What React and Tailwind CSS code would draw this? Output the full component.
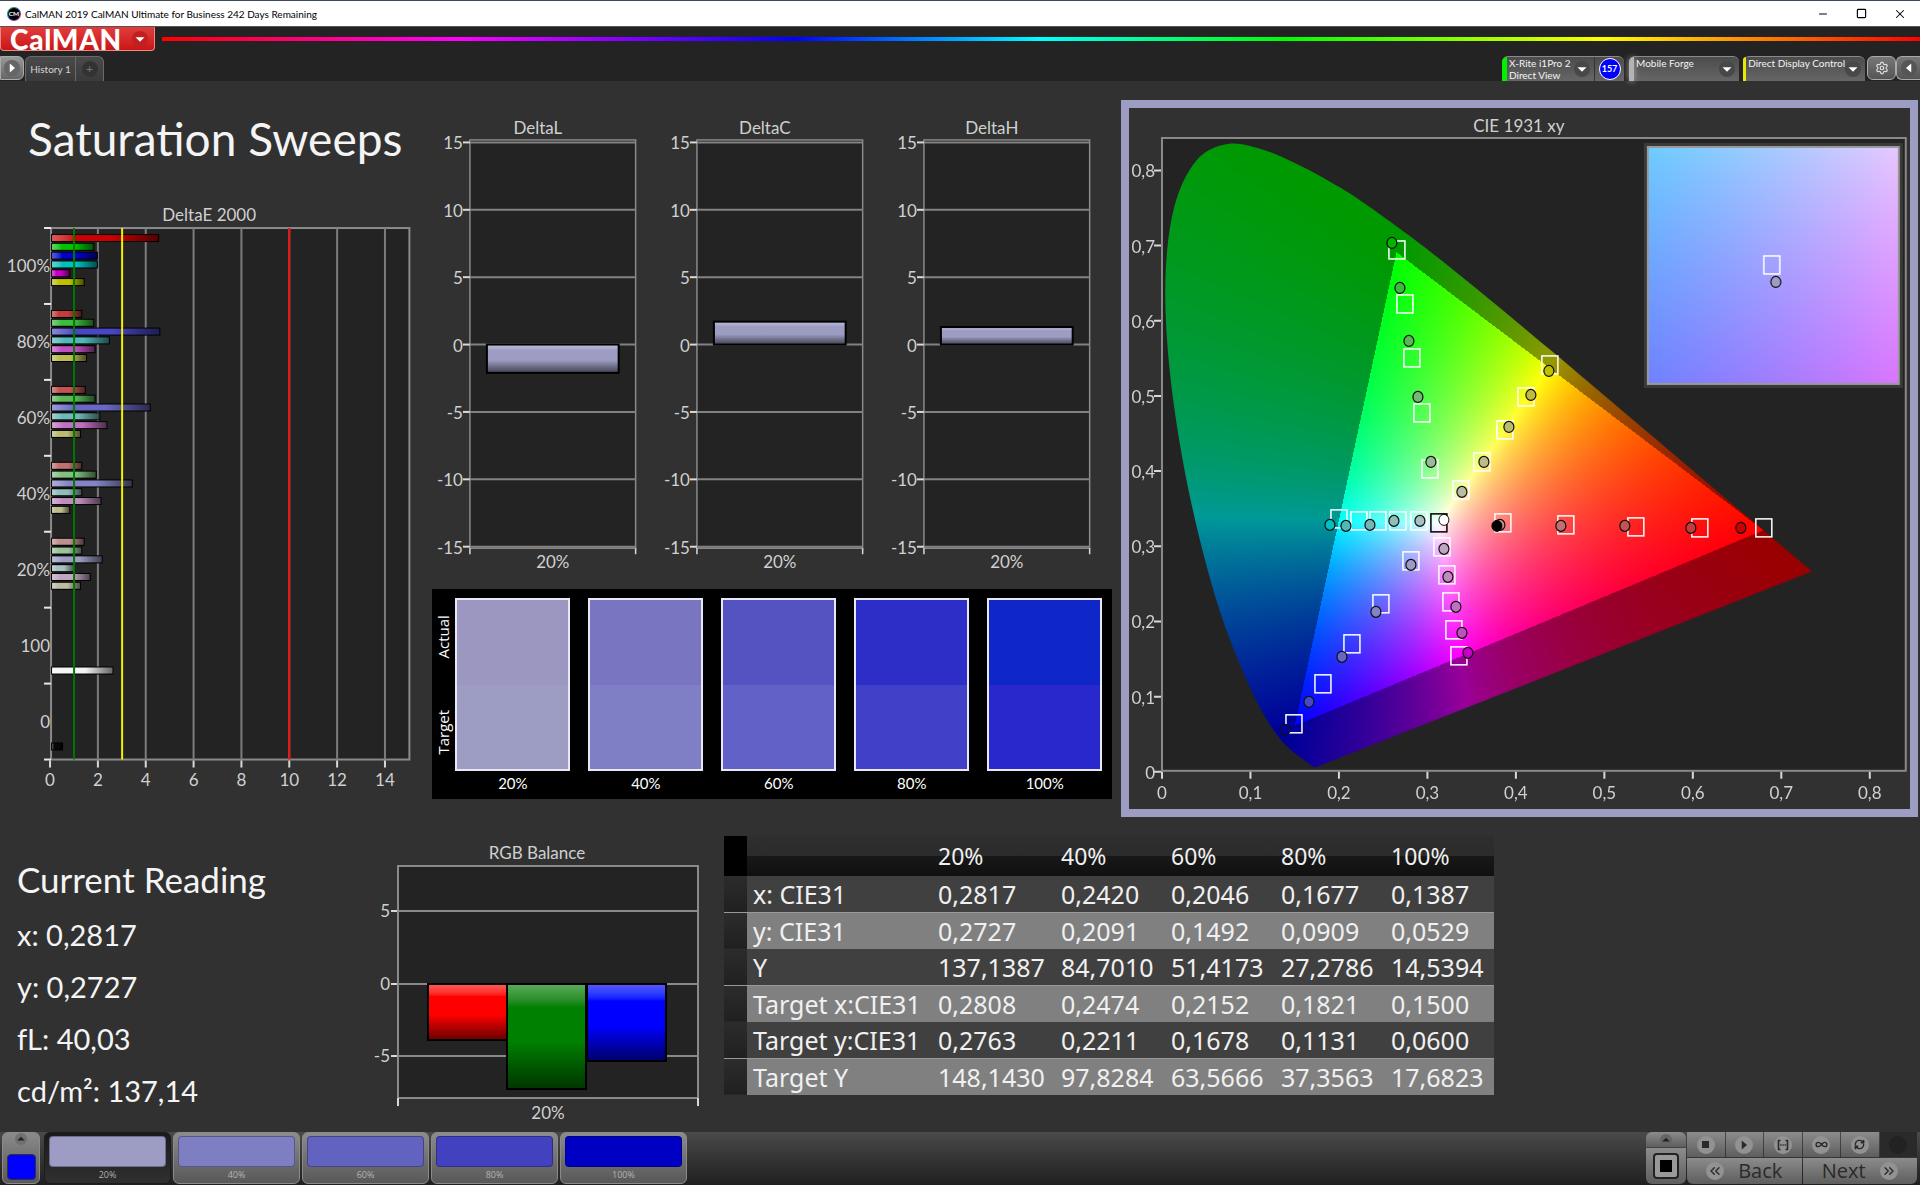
import React, { useLayoutEffect, useRef } from 'react';
import { Minus, Square, X, Settings, Infinity as InfinityIcon, RefreshCw, ChevronsLeft, ChevronsRight } from 'lucide-react';

const LEVELS = ['20%', '40%', '60%', '80%', '100%'];

const DELTA_E = [
  { label: '100%', bars: [[4.5, '#cc0000'], [1.8, '#00c400'], [1.95, '#0000cc'], [1.95, '#00c0c0'], [0.8, '#c400c4'], [1.4, '#c0c000']] },
  { label: '80%', bars: [[1.3, '#c43c3c'], [1.8, '#3cbc3c'], [4.55, '#4848c4'], [2.45, '#50b8b8'], [1.85, '#c050c0'], [1.5, '#bcbc50']] },
  { label: '60%', bars: [[1.45, '#c45454'], [1.85, '#58b858'], [4.15, '#6868c4'], [2.05, '#70b8b8'], [2.35, '#c070c0'], [1.25, '#bcbc70']] },
  { label: '40%', bars: [[1.3, '#c07070'], [1.9, '#80c080'], [3.4, '#8484c4'], [1.3, '#90bcbc'], [2.1, '#c08cc0'], [0.8, '#bcbc8c']] },
  { label: '20%', bars: [[1.4, '#c09090'], [1.3, '#9cc49c'], [2.15, '#9c9cc4'], [1, '#a8c0c0'], [1.65, '#c0a4c0'], [1.25, '#bcbca4']] },
  { label: '100', bars: [null, null, null, null, null, null, [2.6, '#f4f4f4']] },
  { label: '0', bars: [null, null, null, null, null, null, [0.5, '#080808']] },
];

const COMPARE = [
  { label: '20%', actual: '#9c97c0', target: '#9d9dc4' },
  { label: '40%', actual: '#7975c1', target: '#7f7fc6' },
  { label: '60%', actual: '#5552c1', target: '#6261c7' },
  { label: '80%', actual: '#2d2dc7', target: '#4140c8' },
  { label: '100%', actual: '#0f26c9', target: '#2928cd' },
];

const READINGS = [
  ['x: CIE31', '0,2817', '0,2420', '0,2046', '0,1677', '0,1387'],
  ['y: CIE31', '0,2727', '0,2091', '0,1492', '0,0909', '0,0529'],
  ['Y', '137,1387', '84,7010', '51,4173', '27,2786', '14,5394'],
  ['Target x:CIE31', '0,2808', '0,2474', '0,2152', '0,1821', '0,1500'],
  ['Target y:CIE31', '0,2763', '0,2211', '0,1678', '0,1131', '0,0600'],
  ['Target Y', '148,1430', '97,8284', '63,5666', '37,3563', '17,6823'],
];

const PATCHES = [
  { label: '20%', color: '#9c9cc4' },
  { label: '40%', color: '#7e7ec2' },
  { label: '60%', color: '#6262c0' },
  { label: '80%', color: '#4242c0' },
  { label: '100%', color: '#0000c4' },
];

// CIE 1931 2° spectral locus
const LOCUS = [
  [0.1741, 0.005], [0.1714, 0.0051], [0.1689, 0.0069], [0.1644, 0.0109], [0.1566, 0.0177], [0.144, 0.0297],
  [0.1355, 0.0399], [0.1241, 0.0578], [0.1096, 0.0868], [0.0913, 0.1327], [0.0687, 0.2007], [0.0454, 0.295],
  [0.0235, 0.4127], [0.0082, 0.5384], [0.0039, 0.6548], [0.0139, 0.7502], [0.0389, 0.812], [0.0743, 0.8338],
  [0.1142, 0.8262], [0.1547, 0.8059], [0.1929, 0.7816], [0.2296, 0.7543], [0.3016, 0.6923], [0.3731, 0.6245],
  [0.4441, 0.5547], [0.5125, 0.4866], [0.5752, 0.4242], [0.627, 0.3725], [0.6658, 0.334], [0.6915, 0.3083],
  [0.719, 0.2809], [0.7347, 0.2653],
];

const TARGETS = [
  [1397, 250], [1405, 304], [1412, 358], [1422, 413], [1430, 469],
  [1550, 365], [1526, 397], [1505, 430], [1482, 462], [1461, 490],
  [1339, 519], [1359, 521], [1378, 521], [1398, 521], [1419, 521],
  [1503, 523], [1566, 525], [1636, 527], [1700, 528], [1764, 528],
  [1442, 547], [1447, 575], [1451, 602], [1454, 630], [1459, 656],
  [1411, 561], [1381, 604], [1352, 644], [1323, 684], [1294, 724],
];

const MEASURED = [
  [1392, 243, '#00b400'], [1400, 288, '#3cbc3c'], [1409, 341, '#58b858'], [1418, 397, '#74b874'], [1431, 462, '#98bc98'],
  [1549, 371, '#c0c000'], [1531, 395, '#bcbc40'], [1509, 427, '#bcbc68'], [1484, 462, '#bcbc88'], [1462, 492, '#bcbca0'],
  [1330, 525, '#00c0c0'], [1346, 526, '#50b8b8'], [1370, 525, '#70b8b8'], [1394, 521, '#90bcbc'], [1420, 521, '#a8c0c0'],
  [1500, 525, '#c09090'], [1561, 526, '#c07070'], [1625, 526, '#c45454'], [1691, 528, '#c43c3c'], [1741, 528, '#cc0000'],
  [1444, 549, '#c0a4c0'], [1448, 577, '#c08cc0'], [1456, 607, '#c070c0'], [1462, 633, '#c050c0'], [1468, 653, '#c400c4'],
  [1411, 565, '#9c9cc4'], [1376, 612, '#8484c4'], [1342, 657, '#6868c4'], [1309, 702, '#4848c4'], [1285, 730, '#0000a0'],
];

// Display P3 primaries, brightest channel scaled to full
function xyToRgb(x, y) {
  const X = x / y;
  const Z = (1 - x - y) / y;
  const r = 2.4935 * X - 0.9314 - 0.4027 * Z;
  const g = -0.8295 * X + 1.7627 + 0.0236 * Z;
  const b = 0.0358 * X - 0.0762 + 0.9569 * Z;
  const inside = r >= 0 && g >= 0 && b >= 0;
  const k = (inside ? 255 : 153) / Math.max(r, g, b);
  return [Math.max(0, r * k), Math.max(0, g * k), Math.max(0, b * k)];
}

function Gamut({ x0, y0, x1, y1, clip = false }) {
  const ref = useRef(null);
  useLayoutEffect(() => {
    const canvas = ref.current;
    const { width: w, height: h } = canvas;
    const ctx = canvas.getContext('2d');
    const img = ctx.createImageData(w, h);
    for (let j = 0; j < h; j++) {
      for (let i = 0; i < w; i++) {
        const rgb = xyToRgb(x0 + ((i + 0.5) / w) * (x1 - x0), y1 - ((j + 0.5) / h) * (y1 - y0));
        img.data.set([rgb[0], rgb[1], rgb[2], 255], (j * w + i) * 4);
      }
    }
    ctx.putImageData(img, 0, 0);
    if (clip) {
      const pts = LOCUS.map(([x, y]) => [((x - x0) / (x1 - x0)) * w, ((y1 - y) / (y1 - y0)) * h]);
      const at = (i) => pts[Math.min(Math.max(i, 0), pts.length - 1)];
      ctx.globalCompositeOperation = 'destination-in';
      ctx.beginPath();
      ctx.moveTo(pts[0][0], pts[0][1]);
      for (let i = 0; i < pts.length - 1; i++) {
        const [a, b, c, d] = [at(i - 1), at(i), at(i + 1), at(i + 2)];
        ctx.bezierCurveTo(
          b[0] + (c[0] - a[0]) / 6, b[1] + (c[1] - a[1]) / 6,
          c[0] - (d[0] - b[0]) / 6, c[1] - (d[1] - b[1]) / 6,
          c[0], c[1],
        );
      }
      ctx.closePath();
      ctx.fill();
    }
  }, [x0, y0, x1, y1, clip]);
  return <canvas ref={ref} width={clip ? 744 : 253} height={clip ? 633 : 238} className="block h-full w-full" />;
}

function Arrow({ dir = 'down', className = '' }) {
  const d = { down: 'M2 5.500h12l-6 6z', up: 'M2 10.500h12l-6-6z', right: 'M5 2v12l7-6z', left: 'M11 2v12l-7-6z' }[dir];
  return (
    <svg viewBox="0 0 16 16" className={`h-3 w-3 ${className}`} fill="currentColor">
      <path d={d} />
    </svg>
  );
}

function TitleBar() {
  return (
    <div className="flex h-[26px] items-center border-t border-[#3a4a5c] bg-white pl-[7px] font-['Lato',sans-serif] text-black">
      <svg viewBox="0 0 26 26" className="h-[14px] w-[14px]">
        <defs>
          <linearGradient id="ring" x1="0" y1="0" x2="1" y2="1">
            <stop offset="0" stopColor="#30d030" />
            <stop offset=".5" stopColor="#3050e0" />
            <stop offset="1" stopColor="#e03060" />
          </linearGradient>
        </defs>
        <circle cx="13" cy="13" r="12" fill="#000" stroke="url(#ring)" strokeWidth="2" />
        <text x="13" y="17" textAnchor="middle" fontSize="12" fontWeight="700" fill="#fff">CM</text>
      </svg>
      <span className="ml-1 text-[10px] leading-4">CalMAN 2019 CalMAN Ultimate for Business 242 Days Remaining</span>
      <div className="ml-auto flex h-full">
        <button aria-label="Minimize" className="flex w-[38px] items-center justify-center"><Minus size={12} strokeWidth={2} /></button>
        <button aria-label="Maximize" className="flex w-[38px] items-center justify-center"><Square size={11} strokeWidth={2.5} /></button>
        <button aria-label="Close" className="flex w-[40px] items-center justify-center"><X size={14} strokeWidth={1.8} /></button>
      </div>
    </div>
  );
}

function Device({ bar, lines, className, children }) {
  return (
    <div className={`flex h-[25px] rounded-t-md border-t border-[#8a8a8a] bg-linear-to-b from-[#4c4c4c] to-[#666] ${className}`}>
      <div className={`w-[5px] rounded-tl-md ${bar}`} />
      <button className="flex flex-1 items-center justify-between pr-1 pl-[2px] text-left text-[10px] leading-3 whitespace-nowrap text-[#f4f4f4]">
        <span className="self-start">
          {lines.map((l) => <span key={l} className="block">{l}</span>)}
        </span>
        <span className="flex h-4 w-4 shrink-0 items-center justify-center rounded-full bg-[#484848] text-white"><Arrow /></span>
      </button>
      {children}
    </div>
  );
}

function Header() {
  return (
    <header className="flex h-[55px] flex-col justify-between bg-[#232323] font-['Lato',sans-serif]">
      <div className="flex items-center gap-[7px] border-t border-[#555]">
        <button className="flex h-6 w-[155px] items-center justify-between rounded-b-sm border border-[#e88] border-t-[#e23a3a] bg-linear-to-b from-[#e23a3a] to-[#c81414] pr-[6px] pl-[9px] text-white">
          <span className="text-[28px] leading-6 font-black tracking-wide">CalMAN</span>
          <span className="flex h-4 w-4 items-center justify-center rounded-full bg-[#c02020]"><Arrow /></span>
        </button>
        <div className="h-1 flex-1 bg-[linear-gradient(to_right,#f00,#f0f_17%,#00f_36%,#0ff_50%,#0f0_64%,#ff0_82%,#f00)]" />
      </div>
      <div className="flex items-end">
        <button aria-label="Expand" className="mb-px flex h-6 w-6 items-center justify-center rounded-r-md border border-[#aaa] bg-linear-to-b from-[#999] to-[#666]">
          <span className="flex h-4 w-4 items-center justify-center rounded-full bg-[#666] text-white"><Arrow dir="right" /></span>
        </button>
        <div className="ml-px flex h-[25px] rounded-t-md border border-b-0 border-[#6a6a6a] bg-linear-to-b from-[#4a4a4a] to-[#3a3a3a] text-[#d4d4d4]">
          <button className="w-[50px] border-r border-[#6a6a6a] text-[10px] whitespace-nowrap">History 1</button>
          <button aria-label="Add history" className="flex w-[27px] items-center justify-center">
            <span className="flex h-4 w-4 items-center justify-center rounded-full bg-[#333] text-xs text-[#777]">+</span>
          </button>
        </div>
        <div className="ml-auto flex items-end">
          <Device bar="bg-[#00f000]" lines={['X-Rite i1Pro 2', 'Direct View']} className="w-[122px]">
            <div className="flex w-[30px] items-center justify-center border-l border-[#333]">
              <span className="flex h-[22px] w-[22px] items-center justify-center rounded-full border border-white bg-[#0000ff] text-[9px] font-bold text-white">157</span>
            </div>
          </Device>
          <Device bar="bg-[#b4b4b4] shadow-[0_0_6px_#aaa]" lines={['Mobile Forge']} className="ml-[5px] w-[110px]" />
          <Device bar="bg-[#e8e800]" lines={['Direct Display Control']} className="ml-1 w-[122px]" />
          <button aria-label="Settings" className="mb-px ml-[2px] flex h-6 w-[29px] items-center justify-center rounded-md border border-[#aaa] bg-linear-to-b from-[#777] to-[#555]">
            <Settings size={14} className="text-[#ddd]" />
          </button>
          <button aria-label="Collapse" className="mb-px flex h-6 w-[24px] items-center justify-center rounded-l-md border border-r-0 border-[#aaa] bg-linear-to-b from-[#777] to-[#555]">
            <span className="flex h-4 w-4 items-center justify-center rounded-full bg-[#555] text-white"><Arrow dir="left" /></span>
          </button>
        </div>
      </div>
    </header>
  );
}

function Shade({ id, color, vertical }) {
  return (
    <linearGradient id={id} x1="0" y1="0" x2={vertical ? 0 : 1} y2={vertical ? 1 : 0}>
      <stop offset="0" stopColor={`color-mix(in srgb, ${color}, white 35%)`} />
      <stop offset=".22" stopColor={color} />
      <stop offset=".55" stopColor={color} />
      <stop offset="1" stopColor={`color-mix(in srgb, ${color}, black 58%)`} />
    </linearGradient>
  );
}

function DeltaEChart() {
  const px = (v) => 50 + v * 23.9;
  const rowH = 531 / 7;
  return (
    <svg viewBox="0 0 430 600" className="block w-full fill-[#d0d0d0] font-['Lato',sans-serif] text-[17px]">
      <text x="209" y="21" textAnchor="middle">DeltaE 2000</text>
      <rect x="51" y="28" width="358" height="531" fill="#232323" stroke="#8a8a8a" strokeWidth="2" />
      {[2, 4, 6, 8, 10, 12, 14].map((v) => (
        <path key={v} d={`M${px(v)} 28v531`} stroke="#7c7c7c" strokeWidth="2" />
      ))}
      {[0, 2, 4, 6, 8, 10, 12, 14].map((v) => (
        <g key={v}>
          <path d={`M${px(v)} 560v7`} stroke="#d8d8d8" strokeWidth="2" />
          <text x={px(v)} y="585" textAnchor="middle">{v}</text>
        </g>
      ))}
      {DELTA_E.map((row, r) => (
        <g key={row.label}>
          <path d={`M44 ${28 + r * rowH}h7`} stroke="#e8e8e8" strokeWidth="2" />
          <text x="50" y={72 + r * rowH} textAnchor="end">{row.label}</text>
          {row.bars.map((bar, i) => bar && (
            <g key={i}>
              <defs><Shade id={`de${r}-${i}`} color={bar[1]} /></defs>
              <rect x="51" y={34 + r * rowH + i * 8.8} width={bar[0] * 24} height="8" fill="#000" />
              <rect x="52" y={35 + r * rowH + i * 8.8} width={bar[0] * 24 - 2} height="6" fill={`url(#de${r}-${i})`} />
            </g>
          ))}
        </g>
      ))}
      <path d="M44 559h7" stroke="#e8e8e8" strokeWidth="2" />
      <path d="M74 28v531" stroke="#007800" strokeWidth="2" />
      <path d="M122 28v531" stroke="#f0f000" strokeWidth="2" />
      <path d="M289 28v531" stroke="#f01010" strokeWidth="2" />
    </svg>
  );
}

function DeltaChart({ title, value }) {
  const py = (v) => 245 - v * 13.5;
  const top = Math.min(py(value), py(0));
  return (
    <svg viewBox="0 0 227 490" className="block w-full fill-[#d0d0d0] font-['Lato',sans-serif] text-[17px]">
      <defs><Shade id={title} color="#9d9dc4" vertical /></defs>
      <text x="108" y="34" textAnchor="middle">{title}</text>
      <rect x="40" y="40" width="166" height="409" fill="#232323" stroke="#8a8a8a" strokeWidth="1.5" />
      {[15, 10, 5, 0, -5, -10, -15].map((v) => (
        <g key={v}>
          <path d={`M40 ${py(v)}h166`} stroke="#828282" strokeWidth="2" />
          <path d={`M33 ${py(v)}h7`} stroke="#d8d8d8" strokeWidth="2" />
          <text x="33" y={py(v) + 7} textAnchor="end">{v}</text>
        </g>
      ))}
      <path d="M40 449v6M206 449v6" stroke="#d8d8d8" strokeWidth="1.5" />
      <rect x="57" y={top} width="132" height={Math.abs(value) * 13.5} fill={`url(#${title})`} stroke="#000" strokeWidth="2" />
      <text x="123" y="469" textAnchor="middle">20%</text>
    </svg>
  );
}

function SwatchCompare() {
  return (
    <div className="ml-[2px] flex h-[210px] bg-black pt-[9px] pr-[10px] font-['Lato',sans-serif] text-[15px] text-white">
      <div className="flex h-[173px] w-[23px] flex-col-reverse gap-4 font-['Open_Sans',sans-serif]">
        <span className="flex flex-1 rotate-180 items-center justify-center [writing-mode:vertical-rl]">Target</span>
        <span className="flex flex-1 rotate-180 items-center justify-center [writing-mode:vertical-rl]">Actual</span>
      </div>
      <div className="grid flex-1 grid-cols-5 gap-[18px]">
        {COMPARE.map((c) => (
          <div key={c.label} className="text-center">
            <div className="flex h-[173px] flex-col border-2 border-[#e8e8f4]">
              <div className="flex-1" style={{ backgroundColor: c.actual }} />
              <div className="flex-1" style={{ backgroundColor: c.target }} />
            </div>
            <div className="pt-[2px] leading-5">{c.label}</div>
          </div>
        ))}
      </div>
    </div>
  );
}

function CieChart() {
  const px = (v) => 1162 + v * 885;
  const py = (v) => 772 - v * 752;
  const ticks = [0, 1, 2, 3, 4, 5, 6, 7, 8];
  const name = (t) => (t ? `0,${t}` : '0');
  return (
    <section className="border-8 border-[#9d9dc4]">
      <svg viewBox="1129 108 781 701" className="block w-full fill-[#d0d0d0] font-['Lato',sans-serif] text-[17px]">
        <text x="1519" y="132" textAnchor="middle">CIE 1931 xy</text>
        <rect x="1162" y="138" width="744" height="633" fill="#232323" />
        <foreignObject x="1162" y="138" width="744" height="633">
          <Gamut x0={0} x1={744 / 885} y0={0} y1={633 / 752} clip />
        </foreignObject>
        <rect x="1162" y="138" width="744" height="633" fill="none" stroke="#8a8a8a" strokeWidth="2" />
        {ticks.map((t) => (
          <g key={t}>
            <path d={`M${px(t / 10)} 772v7M1154 ${py(t / 10)}h7`} stroke="#d8d8d8" strokeWidth="2" />
            <text x={px(t / 10)} y="799" textAnchor="middle">{name(t)}</text>
            <text x="1155" y={py(t / 10) + 7} textAnchor="end">{name(t)}</text>
          </g>
        ))}
        {TARGETS.map(([x, y]) => (
          <rect key={`${x}-${y}`} x={x - 8} y={y - 9} width="16" height="18" fill="none" stroke="#fff" strokeWidth="1.5" />
        ))}
        <rect x="1431" y="514" width="16" height="18" fill="none" stroke="#000" strokeWidth="1.5" />
        {MEASURED.map(([x, y, c]) => (
          <ellipse key={`${x}-${y}`} cx={x} cy={y} rx="5" ry="5.5" fill={c} stroke="#101010" strokeWidth="1.2" />
        ))}
        <ellipse cx="1444" cy="520" rx="5" ry="5.5" fill="#fff" stroke="#101010" />
        <ellipse cx="1497" cy="526" rx="5" ry="5.5" fill="#000" stroke="#000" />
        <foreignObject x="1648" y="147" width="251" height="237">
          <Gamut x0={0.2543} x1={0.3073} y0={0.2478} y1={0.3008} />
        </foreignObject>
        <rect x="1646" y="145" width="255" height="241" fill="none" stroke="#3a3a3a" strokeWidth="4" />
        <rect x="1648" y="147" width="251" height="237" fill="none" stroke="#9a9a9a" strokeWidth="2" />
        <rect x="1764" y="256" width="16" height="18" fill="none" stroke="#fff" strokeWidth="1.5" />
        <ellipse cx="1776" cy="282" rx="5" ry="5.5" fill="#9c9cc4" stroke="#101010" strokeWidth="1.2" />
      </svg>
    </section>
  );
}

function RgbBalance() {
  const bars = [['r', 58, 56, '#ff0000'], ['g', 137, 105, '#008000'], ['b', 217, 77, '#0000ff']];
  return (
    <svg viewBox="0 0 354 296" className="block w-full fill-[#d0d0d0] font-['Lato',sans-serif] text-[17px]">
      <text x="167" y="23" textAnchor="middle">RGB Balance</text>
      <rect x="28" y="30" width="300" height="232" fill="#232323" stroke="#8a8a8a" strokeWidth="2" />
      {[[5, 75], [0, 148], [-5, 220]].map(([v, y]) => (
        <g key={v}>
          <path d={`M28 ${y}h300`} stroke="#8a8a8a" strokeWidth="2" />
          <path d={`M21 ${y}h6`} stroke="#d8d8d8" strokeWidth="2" />
          <text x="20" y={y + 6} textAnchor="end">{v}</text>
        </g>
      ))}
      {bars.map(([id, x, h, c]) => (
        <g key={id}>
          <defs><Shade id={`bal-${id}`} color={c} vertical /></defs>
          <rect x={x} y="148" width="79" height={h} fill={`url(#bal-${id})`} stroke="#000" strokeWidth="2" />
        </g>
      ))}
      <path d="M28 262v8M328 262v8" stroke="#d8d8d8" strokeWidth="2" />
      <text x="178" y="283" textAnchor="middle">20%</text>
    </svg>
  );
}

function ReadingsTable() {
  return (
    <table className="w-[770px] table-fixed border-collapse text-left font-['Noto_Sans',sans-serif] text-[25px] leading-9 text-[#f0f0f0]">
      <colgroup>
        <col className="w-[23px]" />
        <col className="w-[185px]" />
        <col className="w-[123px]" />
        <col className="w-[110px]" />
        <col className="w-[110px]" />
        <col className="w-[110px]" />
        <col />
      </colgroup>
      <thead>
        <tr className="h-[40px] bg-[linear-gradient(#2e2e2e,#2b2b2b_50%,#181818_50%,#101010)] text-[23px]">
          <td className="bg-black" />
          <td />
          {LEVELS.map((l) => <th key={l} scope="col" className="p-0 pl-[6px] font-normal">{l}</th>)}
        </tr>
      </thead>
      <tbody>
        {READINGS.map((row) => (
          <tr key={row[0]} className="h-[36px] odd:bg-[#404040] even:border-t even:border-[#999] even:bg-[#808080]">
            <td className="bg-linear-to-b from-[#2c2c2c] to-[#202020]" />
            <th scope="row" className="p-0 pl-[6px] font-normal whitespace-nowrap">{row[0]}</th>
            {row.slice(1).map((v) => <td key={v} className="p-0 pl-[6px]">{v}</td>)}
          </tr>
        ))}
      </tbody>
    </table>
  );
}

function Dot({ children, className = 'bg-[#929292]' }) {
  return <span className={`flex h-[18px] w-[18px] items-center justify-center rounded-full text-[#2a2a2a] ${className}`}>{children}</span>;
}

function Footer() {
  const cell = 'flex items-center justify-center bg-linear-to-b from-[#8c8c8c] to-[#5e5e5e]';
  return (
    <footer className="flex h-[53px] bg-linear-to-b from-[#4a4a4a] to-[#202020] pr-[3px] pl-[2px] font-['Open_Sans',sans-serif]">
      <button aria-label="Patch menu" className="flex h-[52px] w-[38px] flex-col items-center justify-between rounded-md border border-[#8a8a8a] bg-linear-to-b from-[#8a8a8a] to-[#5a5a5a] pb-[3px]">
        <span className="flex h-3 w-3 items-center justify-center rounded-full bg-[#707070] text-[#222]"><Arrow dir="up" className="p-px" /></span>
        <span className="h-[26px] w-[29px] rounded-sm border border-[#333] bg-[#0000ff]" />
      </button>
      <div className="ml-1 flex gap-[2px]">
        {PATCHES.map((p, i) => (
          <button
            key={p.label}
            className={`flex h-[52px] w-[127px] flex-col rounded-md border px-1 pt-[3px] text-[9px] leading-4 ${
              i === 0
                ? 'border-[#1c1c1c] bg-linear-to-b from-[#1a1a1a] to-[#303030] text-[#b0b0b0]'
                : 'border-[#8a8a8a] bg-linear-to-b from-[#8c8c8c] to-[#585858] text-[#b4b4b4]'
            }`}
          >
            <span className="block h-[31px] w-full shrink-0 rounded-sm border border-black/30" style={{ backgroundColor: p.color }} />
            <span className="w-full">{p.label}</span>
          </button>
        ))}
      </div>
      <div className="ml-auto flex h-[52px] gap-px">
        <div className="flex w-[40px] flex-col overflow-hidden rounded-md">
          <button aria-label="Options" className={`${cell} h-[16px] border-b border-[#444]`}>
            <span className="flex h-3 w-3 items-center justify-center rounded-full bg-[#666] text-[#222]"><Arrow dir="up" className="p-px" /></span>
          </button>
          <button aria-label="Pattern window" className={`${cell} flex-1`}>
            <span className="flex h-[26px] w-[26px] items-center justify-center rounded-sm border-2 border-[#222] bg-[#999]">
              <span className="h-3 w-3 bg-black" />
            </span>
          </button>
        </div>
        <div className="flex w-[230px] flex-col gap-px">
          <div className="grid h-[25px] grid-cols-6 gap-px">
            <button aria-label="Stop" className={cell}><Dot><span className="h-[7px] w-[7px] bg-current" /></Dot></button>
            <button aria-label="Play" className={cell}><Dot><Arrow dir="right" /></Dot></button>
            <button aria-label="Read series" className={cell}>
              <Dot>
                <svg viewBox="0 0 12 12" className="h-3 w-3" fill="none" stroke="currentColor" strokeWidth="1.6">
                  <path d="M3.500 1.500H1.500v9h2M8.500 1.500h2v9h-2M3.200 6h1.300M5.400 6h1.300M7.600 6h1.300" />
                </svg>
              </Dot>
            </button>
            <button aria-label="Continuous" className={cell}><Dot><InfinityIcon size={13} strokeWidth={2.6} /></Dot></button>
            <button aria-label="Refresh" className={cell}><Dot><RefreshCw size={11} strokeWidth={3.2} /></Dot></button>
            <div className="flex items-center justify-center bg-[#2a2a2a]"><Dot className="bg-[#222]" /></div>
          </div>
          <div className="grid flex-1 grid-cols-2 gap-px overflow-hidden rounded-b-md text-[20px] leading-6 text-[#2a2a2a]">
            <button className={`${cell} gap-[14px]`}><Dot><ChevronsLeft size={16} /></Dot>Back</button>
            <button className={`${cell} gap-[14px]`}>Next<Dot><ChevronsRight size={16} /></Dot></button>
          </div>
        </div>
      </div>
    </footer>
  );
}

export default function App() {
  return (
    <div className="flex min-h-screen flex-col bg-[#313131]">
      <TitleBar />
      <Header />
      <main className="flex-1">
        <div className="grid grid-cols-[430fr_682fr_808fr] items-start pb-[19px]">
          <section>
            <h1 className="px-7 pt-7 pb-[31px] font-['Lato',sans-serif] text-[46px] leading-[60px] whitespace-nowrap text-[#f4f4f4]">Saturation Sweeps</h1>
            <DeltaEChart />
          </section>
          <section className="pt-[19px]">
            <div className="grid grid-cols-3 pr-[2px]">
              <DeltaChart title="DeltaL" value={-2.1} />
              <DeltaChart title="DeltaC" value={1.7} />
              <DeltaChart title="DeltaH" value={1.3} />
            </div>
            <SwatchCompare />
          </section>
          <div className="pt-[19px] pr-[2px] pl-[9px]">
            <CieChart />
          </div>
        </div>
        <div className="grid grid-cols-[370fr_354fr_1196fr] items-start">
          <section className="pt-[13px] pl-[17px] font-['Lato',sans-serif] text-[29px] leading-[52px] text-[#f4f4f4]">
            <h2 className="text-[35px] leading-[60px]">Current Reading</h2>
            <p>x: 0,2817</p>
            <p>y: 0,2727</p>
            <p>fL: 40,03</p>
            <p>cd/m²: 137,14</p>
          </section>
          <RgbBalance />
          <ReadingsTable />
        </div>
      </main>
      <Footer />
    </div>
  );
}
